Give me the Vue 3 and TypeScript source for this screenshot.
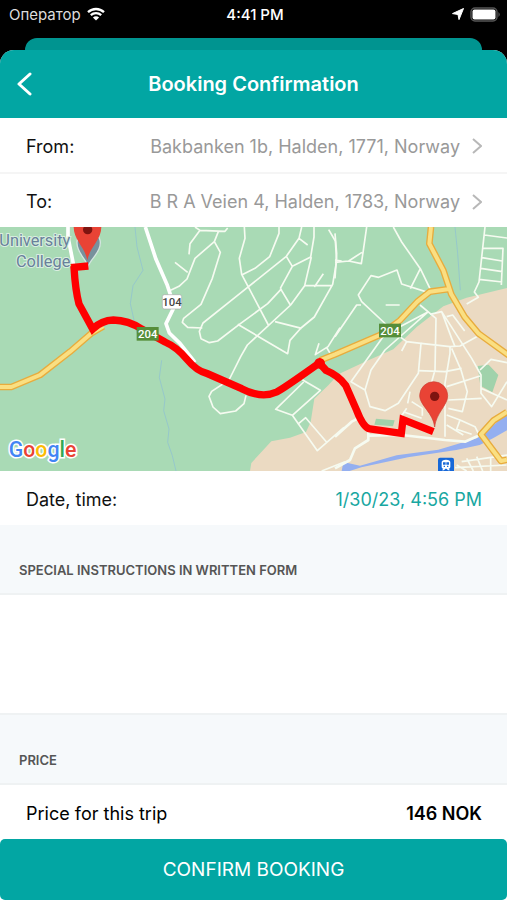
<script setup lang="ts">
import { ref } from 'vue'

interface Place {
  label: string
  address: string
}

const places: Place[] = [
  { label: 'From:', address: 'Bakbanken 1b, Halden, 1771, Norway' },
  { label: 'To:', address: 'B R A Veien 4, Halden, 1783, Norway' },
]

const countyRoads =
  'M0 480h34l86-36 90-70 65-56 35-20M960 400l45-18 135-58 60-44 52-56 38-30 58-8M1293 0l-5 50 42 80 24 72 40 68 42 50 90 65M1521 555l-40 25-38 42 60 80 18-4'

const instructions = ref('')
</script>

<template>
  <div class="screen">
    <div class="status">
      <div class="status-side">
        <span class="carrier">Оператор</span>
        <svg class="wifi" viewBox="0 0 18 14" aria-hidden="true">
          <path d="M1 5.200a11.600 11.600 0 0 1 16 0M3.800 8.100a7.600 7.600 0 0 1 10.400 0" fill="none" stroke="#fff" stroke-width="2.300" />
          <path d="M9 13.600 5.900 10.500a4.400 4.400 0 0 1 6.200 0z" fill="#fff" />
        </svg>
      </div>
      <span class="clock">4:41 PM</span>
      <div class="status-side end">
        <svg class="location" viewBox="0 0 12 12" aria-hidden="true">
          <path d="M11.500.5 7 11.600 6 6.500.5 5.600z" fill="#fff" stroke="#fff" stroke-linejoin="round" />
        </svg>
        <svg class="battery" viewBox="0 0 31 15" aria-hidden="true">
          <rect x="1" y="1" width="26" height="13" rx="4" fill="none" stroke="#555" stroke-width="1.400" />
          <rect x="2.500" y="2.500" width="23" height="10" rx="2" fill="#fff" />
          <path d="M28.500 5q2.400 2.500 0 5z" fill="#666" />
        </svg>
      </div>
    </div>

    <div class="previous-sheet"></div>

    <main class="sheet">
      <header class="header">
        <button class="back" type="button" aria-label="Back">
          <svg viewBox="0 0 16 26" aria-hidden="true">
            <path d="M14 3 3 13l11 10" fill="none" stroke="#fff" stroke-width="3" stroke-linecap="round" stroke-linejoin="round" />
          </svg>
        </button>
        <h1>Booking Confirmation</h1>
      </header>

      <button v-for="place in places" :key="place.label" class="row place" type="button">
        <span>{{ place.label }}</span>
        <span class="address">{{ place.address }}</span>
        <svg class="chevron" viewBox="0 0 10 16" aria-hidden="true">
          <path d="m1 1 8 7-8 7" fill="none" stroke="#b8b8b8" stroke-width="2" />
        </svg>
      </button>

      <svg class="map" viewBox="0 0 1521 732" role="img" aria-label="Route map">
        <rect width="1521" height="732" fill="#a9dab5" />
        <!-- built-up area -->
        <path d="M750 732 754 708 814 643 870 632 918 615 932 585 943 515 985 475 1015 442 1100 402 1180 367 1250 300 1330 238 1400 212 1521 183V732z" fill="#ebdac2" />
        <path d="m1433 417 33-4 29 31-18 52-36-20zM1128 575l56 5-5 18-56-5z" fill="#a0d2ab" />
        <!-- streams -->
        <g fill="none" stroke="#96c8cb" stroke-width="3" stroke-linejoin="round">
          <path d="m405 0 6 60 18 70-30 46-8 54 20 90M485 400l-7 52 17 64-4 35 16 55-4 40 14 40 12 50" />
          <path d="m1365 0 8 80 8 110" />
        </g>
        <!-- river -->
        <path d="m1030 705 50 11 110-31 125-17 115-34 57-45 34-33v54l-42 24-40 20-70 15-145 22-140 30-35 11h-24z" fill="#94aff0" />

        <!-- residential streets, western hills -->
        <g class="streets" transform="translate(495 -6)">
          <path d="m90 6 15 10 75 3 8-10M105 16 75 56l-3 32M160 20l-12 30-58 50-24 62-24 22-30 14M30 112l38 30M148 50l18 32-24 78-34 78-52 42-4 12 16 15 44 2" />
          <path d="m238 6 2 34-17 60 7 48 80 152M230 150l40-20 44-35 28-70V6M410 6l-8 34-38 54-150 120-100 80-11 25 5 22 25 12 25-5 65-50 85-62 42-45M402 40l26 20M364 94l18 30 55-28 10-60V6M382 124l-36 66M439 96l-20 86-42 58-130 120-20 35-35 70-52 34-8 15 12 32 22 20 46-8 25-22 6-25M346 190l30 50M218 298l150 88 7-40 33-37 40-33 55-98 12-70-4-60-20-34M330 290l80 20M418 182h85M448 186l27-40M510 105l20 3" />
          <path d="m462 355-11 34 38-24 36-57M484 366l15 25" />
          <path d="m412 464 54 32-84 75-50-18 84-82M382 571l75 106 80-70M398 598l24-20 65 76M470 738l70-28" />
        </g>

        <!-- residential streets, eastern town -->
        <g class="streets" transform="translate(1005 -6)">
          <path d="m95 6-10 70-6 40-38-8-41 4M41 108l40-26M0 25l5 60-5 75M175 6l25 45 56 80 32 66M256 131l-30 60M288 205l-88-28-14-42-55 22-23-5-38 58 10 20 75 70M78 240H65L0 335M152 240h42" />
          <path d="m450 6-18 165-14 30 12 16-35 20M448 30l75 10M444 70h60l-5 110M441 98l60 10M437 130l65 10M432 163l70 8" />
          <path d="M280 260 150 375l-42 60-18 60 15 50 45 12 40-22 60-90 8-90-43-5-25-18M215 350l-15 28M280 260 148 330 48 470l42 25" />
          <path d="m255 240 48 40-3 155-25 90M258 355l87 10 30-2 50-28M345 365v20l-15 90v160M350 370l28 65 19 65-15 60-42-10M250 437l80 3 50-10M335 485l100-32M340 525l100-5M225 500l-7 35" />
          <path d="m285 268 35-8 30 80 10 25M320 260l90 140 28 50v55l32 40 46-75M335 275l18-5 36 48M435 435l33-32 48 10M438 490l78 35" />
          <path d="m215 550-17 25M230 530l32 20v22M205 560l55 20M335 570l40 15 45 20 10 20M335 600l50 30M375 585l-10 28 45 15" />
          <path d="m0 635 50-45 30-15M100 620v25l-40 25-15 35-45 25M100 632l100-2 130 15 60 5 45-20" stroke-width="8" />
          <path d="m380 710 140-20M360 728l155-8M395 700l20 38M425 695l18 43M467 695v43M365 720l30 18" />
        </g>

        <!-- road 104 -->
        <path d="M204 0v30l17 86M436 0l32 97 34 78 10 30 8 40-22 45 10 28 32 31 45 57" fill="none" stroke="#fff" stroke-width="11" stroke-linejoin="round" />

        <!-- yellow county roads -->
        <g fill="none" stroke-linejoin="round">
          <path :d="countyRoads" stroke="#e8ac3d" stroke-width="20" />
          <path :d="countyRoads" stroke="#fadf82" stroke-width="12" />
        </g>

        <!-- college marker under the route start -->
        <path d="M264 118c-8-25-33-40-33-70a33 33 0 0 1 70 0c0 30-27 45-37 70z" fill="#78909c" stroke="#d4e5df" stroke-width="4" />

        <!-- route -->
        <path d="M265 117 222 121Q226 190 237 231L278 306Q305 280 340 279 385 280 425 306L495 345Q530 360 560 396T620 439L725 485Q785 516 830 495 850 485 958 408L978 430Q1015 445 1037 475L1070 550Q1090 602 1110 606L1204 619 1209 578 1300 614" fill="none" stroke="#f00" stroke-width="22" />
        <circle cx="959" cy="409" r="16" fill="#f00" />

        <!-- pins -->
        <g fill="#e94335">
          <path d="M262 100c-8-42-41-60-41-101a41 41 0 0 1 83 0c0 41-34 59-42 101z" />
          <circle cx="263" cy="8" r="14" fill="#7e1410" />
          <path d="M1304 600c-4-42-45-65-45-94a42 42 0 0 1 84 0c0 29-35 52-39 94z" stroke="#cb3f35" stroke-width="2" />
          <circle cx="1304" cy="508" r="14" fill="#7e1410" />
        </g>

        <!-- road shields -->
        <g class="shields">
          <rect x="487" y="203" width="58" height="43" rx="6" fill="#fff" stroke="#aaa" stroke-width="2" />
          <text x="516" y="236" fill="#444">104</text>
          <rect x="410" y="300" width="66" height="41" fill="#568e3a" />
          <text x="443" y="333" fill="#fff">204</text>
          <rect x="1137" y="290" width="66" height="41" fill="#568e3a" />
          <text x="1170" y="323" fill="#fff">204</text>
        </g>

        <!-- railway station -->
        <g>
          <rect x="1314" y="692" width="48" height="48" rx="6" fill="#1768d8" />
          <path d="M1325 720v-14q0-8 13-8t13 8v14q0 5-5 5l4 5h-6l-4-5h-4l-4 5h-6l4-5q-5 0-5-5z" fill="#fff" />
          <path d="M1329 706h8v7h-8zm10 0h8v7h-8zm-8 10h4v4h-4zm10 0h4v4h-4z" fill="#1768d8" />
        </g>

        <g class="place-name">
          <text x="211" y="58">University</text>
          <text x="211" y="119">College</text>
        </g>
        <text class="logo" x="26" y="690"><tspan fill="#4285f4">G</tspan><tspan fill="#ea4335">o</tspan><tspan fill="#fbbc05">o</tspan><tspan fill="#4285f4">g</tspan><tspan fill="#34a853">l</tspan><tspan fill="#ea4335">e</tspan></text>
      </svg>

      <div class="row">
        <span>Date, time:</span>
        <time class="when" datetime="2023-01-30T16:56">1/30/23, 4:56 PM</time>
      </div>

      <h2 class="section"><label for="instructions">SPECIAL INSTRUCTIONS IN WRITTEN FORM</label></h2>
      <textarea id="instructions" v-model="instructions"></textarea>

      <h2 class="section">PRICE</h2>
      <div class="row price">
        <span>Price for this trip</span>
        <strong>146 NOK</strong>
      </div>

      <button class="confirm" type="button">CONFIRM BOOKING</button>
    </main>
  </div>
</template>

<style>
body {
  margin: 0;
  background: #000;
}
</style>

<style scoped>
.screen {
  display: flex;
  flex-direction: column;
  min-height: 100vh;
  background: #000;
  color: #111;
  font-family: Inter, "Liberation Sans", sans-serif;
  font-size: 18px;
}

button {
  border: 0;
  font: inherit;
  color: inherit;
  cursor: pointer;
}

.status {
  display: grid;
  grid-template-columns: 1fr auto 1fr;
  align-items: center;
  height: 28px;
  padding: 0 6px 0 9px;
  margin-bottom: 10px;
  color: #fff;
  font-size: 15px;
}

.status-side {
  display: flex;
  align-items: center;
  gap: 6px;
}

.end {
  justify-content: flex-end;
}

.carrier {
  color: #ddd;
}

.clock {
  font-weight: 500;
}

.wifi {
  width: 18px;
  height: 14px;
}

.location {
  width: 12px;
  height: 12px;
}

.battery {
  width: 31px;
  height: 15px;
}

.previous-sheet {
  height: 12px;
  margin: 0 25px;
  border-radius: 12px 12px 0 0;
  background: #009490;
}

.sheet {
  flex: 1;
  display: flex;
  flex-direction: column;
  overflow: hidden;
  border-radius: 14px 14px 0 0;
  background: #fff;
}

.header {
  display: grid;
  grid-template-columns: 48px 1fr 48px;
  align-items: center;
  height: 68px;
  background: #02a6a3;
  color: #fff;
}

.header h1 {
  margin: 0;
  text-align: center;
  font-size: 20px;
  font-weight: 600;
}

.back {
  display: flex;
  justify-content: center;
  padding: 8px 0;
  background: none;
}

.back svg {
  width: 16px;
  height: 26px;
}

.row {
  display: flex;
  align-items: center;
  justify-content: space-between;
  height: 54px;
  box-sizing: border-box;
  padding: 2px 25px 0 26px;
  background: #fff;
}

.place + .place {
  height: 55px;
  border-top: 2px solid #f5f5f5;
}

.address {
  margin-left: auto;
  margin-right: 12px;
  color: #999;
}

.chevron {
  width: 10px;
  height: 16px;
}

.map {
  display: block;
  width: 100%;
  height: auto;
}

.streets {
  fill: none;
  stroke: #f6fbf1;
  stroke-width: 5px;
  stroke-linejoin: round;
}

.shields {
  font-family: Roboto, sans-serif;
  font-size: 34px;
  font-weight: 500;
  text-anchor: middle;
}

.place-name {
  fill: #68819a;
  stroke: #d9eee0;
  stroke-width: 6px;
  paint-order: stroke;
  font-family: Roboto, sans-serif;
  font-size: 49px;
  text-anchor: end;
}

.logo {
  stroke: #fff;
  stroke-width: 9px;
  paint-order: stroke;
  font-family: Roboto, sans-serif;
  font-size: 64px;
  font-weight: 500;
}

.when {
  color: #18a7a1;
}

.section {
  display: flex;
  align-items: flex-end;
  box-sizing: border-box;
  height: 70px;
  margin: 0;
  padding: 0 19px 16px;
  border-bottom: 2px solid #eff2f3;
  background: #f6f9fb;
  color: #555;
  font-size: 13px;
  line-height: 14px;
  font-weight: 600;
}

textarea {
  flex: 1;
  min-height: 120px;
  box-sizing: border-box;
  padding: 12px 25px;
  border: 0;
  border-bottom: 2px solid #eff2f3;
  outline: 0;
  resize: none;
  background: #fff;
  font: inherit;
}

.price {
  color: #000;
}

.price strong {
  font-weight: 600;
}

.confirm {
  height: 61px;
  border-radius: 5px;
  background: #02a6a3;
  color: #fff;
  font-size: 19px;
}
</style>
